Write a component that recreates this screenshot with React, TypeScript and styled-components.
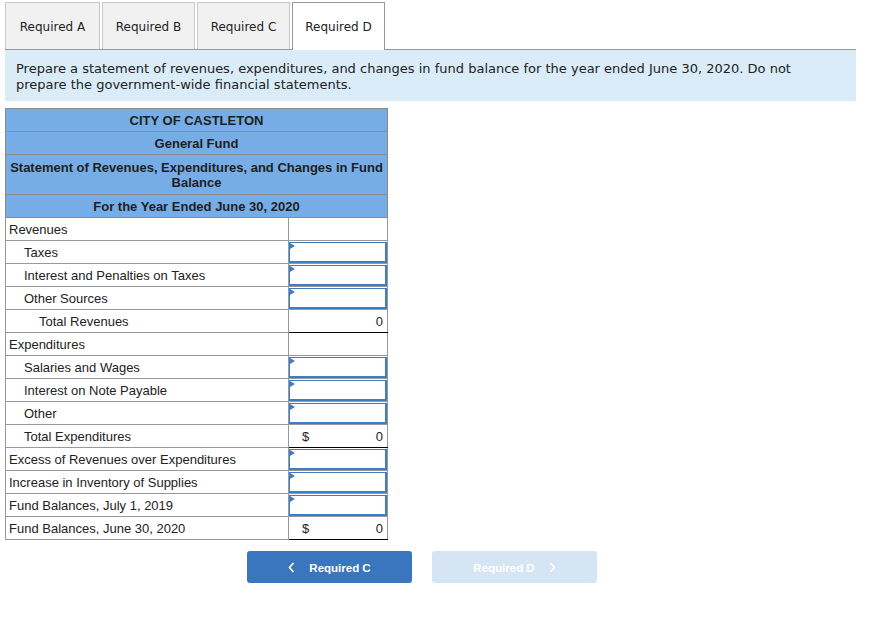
import React from "react";
import styled, { createGlobalStyle, css } from "styled-components";

const GlobalStyle = createGlobalStyle`
  body {
    margin: 0;
    background: #ffffff;
    font-family: "Liberation Sans", Arial, sans-serif;
    color: #222;
  }
`;

const Page = styled.div`
  width: 851px;
  padding: 2px 0 0 5px;
`;

const TabBar = styled.div`
  display: flex;
  gap: 2px;
  height: 47px;
  border-bottom: 1px solid #999;
`;

const Tab = styled.div<{ $active?: boolean; $first?: boolean }>`
  width: ${(p) => (p.$first ? "95px" : "93px")};
  display: flex;
  align-items: center;
  justify-content: center;
  padding-top: 1px;
  font-family: "DejaVu Sans", Verdana, sans-serif;
  font-size: 12px;
  color: #222;
  border: 1px solid #c8c8c8;
  border-bottom: none;
  background: ${(p) => (p.$active ? "#ffffff" : "#f1f1f1")};
  box-sizing: border-box;
  margin-bottom: ${(p) => (p.$active ? "-1px" : "0")};
  ${(p) =>
    p.$active &&
    css`
      border-color: #999;
    `}
`;

const Instructions = styled.div`
  background: #d9ecf8;
  padding: 11px 11px 9px 11px;
  font-family: "DejaVu Sans", Verdana, sans-serif;
  font-size: 13px;
  line-height: 16px;
  color: #222;
  height: 31px;
`;

const Table = styled.table`
  margin-top: 7px;
  width: 383px;
  border-collapse: collapse;
  font-size: 13px;
  border: 1px solid #999;
`;

const HeadCell = styled.td`
  background: #76ade6;
  border: 1px solid #8a8a8a;
  font-weight: bold;
  text-align: center;
  padding: 4px 4px 3px;
  line-height: 15px;
  color: #1e1e1e;
`;

const TallHeadCell = styled(HeadCell)`
  padding: 5px 4px 4px;
`;

const LabelCell = styled.td<{ $indent: number }>`
  border: 1px solid #999;
  height: 22px;
  padding: 0 0 0 ${(p) => 3 + p.$indent * 15}px;
  color: #222;
  white-space: nowrap;
`;

const ValueCell = styled.td<{ $total?: boolean }>`
  width: 98px;
  border: 1px solid #999;
  padding: 0;
  height: 22px;
  ${(p) =>
    p.$total &&
    css`
      border-top: 1px solid #000;
      border-bottom: 1px solid #000;
    `}
`;

const InputBox = styled.div`
  position: relative;
  height: 18px;
  border: 2px solid #3f7cc6;
  border-width: 1px 2px 2px 1px;
  background: #fff;

  &::before {
    content: "";
    position: absolute;
    top: 0;
    left: 0;
    border-left: 5px solid #3f7cc6;
    border-top: 3px solid transparent;
    border-bottom: 3px solid transparent;
  }
`;

const TotalValue = styled.div`
  display: flex;
  justify-content: space-between;
  padding: 0 4px 0 13px;
  font-size: 13px;
`;

const Spacer = styled.span``;

const ButtonRow = styled.div`
  display: flex;
  gap: 20px;
  margin: 11px 0 0 242px;
`;

const NavButton = styled.div<{ $disabled?: boolean }>`
  width: 165px;
  height: 32px;
  border-radius: 3px;
  display: flex;
  align-items: center;
  justify-content: center;
  gap: 14px;
  padding-top: 1px;
  box-sizing: border-box;
  font-family: "Liberation Sans", Arial, sans-serif;
  font-size: 11.5px;
  font-weight: bold;
  color: #fff;
  background: ${(p) => (p.$disabled ? "#d6e5f3" : "#3a76bd")};
`;

const Chevron = ({ dir }: { dir: "left" | "right" }) => (
  <svg width="7" height="11" viewBox="0 0 7 11">
    <path
      d={dir === "left" ? "M5.5 1 L1.5 5.5 L5.5 10" : "M1.5 1 L5.5 5.5 L1.5 10"}
      fill="none"
      stroke="#fff"
      strokeWidth="1.6"
    />
  </svg>
);

type Row = {
  label: string;
  indent: number;
  kind: "blank" | "input" | "total";
  dollar?: boolean;
};

const rows: Row[] = [
  { label: "Revenues", indent: 0, kind: "blank" },
  { label: "Taxes", indent: 1, kind: "input" },
  { label: "Interest and Penalties on Taxes", indent: 1, kind: "input" },
  { label: "Other Sources", indent: 1, kind: "input" },
  { label: "Total Revenues", indent: 2, kind: "total" },
  { label: "Expenditures", indent: 0, kind: "blank" },
  { label: "Salaries and Wages", indent: 1, kind: "input" },
  { label: "Interest on Note Payable", indent: 1, kind: "input" },
  { label: "Other", indent: 1, kind: "input" },
  { label: "Total Expenditures", indent: 1, kind: "total", dollar: true },
  { label: "Excess of Revenues over Expenditures", indent: 0, kind: "input" },
  { label: "Increase in Inventory of Supplies", indent: 0, kind: "input" },
  { label: "Fund Balances, July 1, 2019", indent: 0, kind: "input" },
  { label: "Fund Balances, June 30, 2020", indent: 0, kind: "total", dollar: true },
];

export default function App() {
  return (
    <>
      <GlobalStyle />
      <Page>
        <TabBar>
          <Tab $first>Required A</Tab>
          <Tab>Required B</Tab>
          <Tab>Required C</Tab>
          <Tab $active>Required D</Tab>
        </TabBar>
        <Instructions>
          Prepare a statement of revenues, expenditures, and changes in fund balance for the year
          ended June 30, 2020. Do not prepare the government-wide financial statements.
        </Instructions>
        <Table>
          <tbody>
            <tr>
              <HeadCell colSpan={2}>CITY OF CASTLETON</HeadCell>
            </tr>
            <tr>
              <HeadCell colSpan={2}>General Fund</HeadCell>
            </tr>
            <tr>
              <TallHeadCell colSpan={2}>
                Statement of Revenues, Expenditures, and Changes in Fund Balance
              </TallHeadCell>
            </tr>
            <tr>
              <HeadCell colSpan={2}>For the Year Ended June 30, 2020</HeadCell>
            </tr>
            {rows.map((r) => (
              <tr key={r.label}>
                <LabelCell $indent={r.indent}>{r.label}</LabelCell>
                <ValueCell $total={r.kind === "total"}>
                  {r.kind === "input" && <InputBox />}
                  {r.kind === "total" && (
                    <TotalValue>
                      {r.dollar ? <span>$</span> : <Spacer />}
                      <span>0</span>
                    </TotalValue>
                  )}
                </ValueCell>
              </tr>
            ))}
          </tbody>
        </Table>
        <ButtonRow>
          <NavButton>
            <Chevron dir="left" />
            Required C
          </NavButton>
          <NavButton $disabled>
            Required D
            <Chevron dir="right" />
          </NavButton>
        </ButtonRow>
      </Page>
    </>
  );
}
